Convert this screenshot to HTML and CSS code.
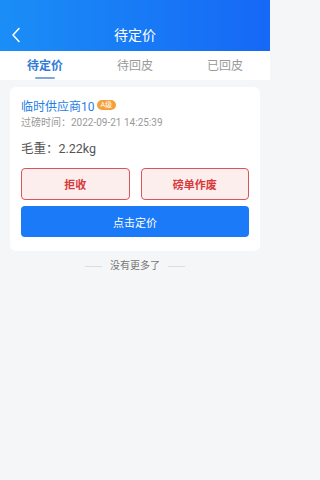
FILE: index.html
```html
<!DOCTYPE html>
<html lang="zh">
<head>
<meta charset="utf-8">
<link rel="stylesheet" href="styles.css">
</head>
<body>
<div class="page">
<div class="header">
  <div class="back">
    <svg width="10" height="16" viewBox="0 0 10 16"><path d="M8 1.5 L2 8 L8 14.5" fill="none" stroke="#fff" stroke-width="1.6" stroke-linecap="round" stroke-linejoin="round"/></svg>
  </div>
  <div class="title">待定价</div>
</div>
<div class="tabs">
  <div class="tab active">待定价</div>
  <div class="tab">待回皮</div>
  <div class="tab">已回皮</div>
</div>
<div class="content">
  <div class="card">
    <div class="name-row">
      <span class="name">临时供应商10</span><span class="badge">A级</span>
    </div>
    <div class="time">过磅时间：2022-09-21 14:25:39</div>
    <div class="weight">毛重：2.22kg</div>
    <div class="btn-row">
      <div class="btn-outline">拒收</div>
      <div class="btn-outline">磅单作废</div>
    </div>
    <div class="btn-primary">点击定价</div>
  </div>
  <div class="nomore"><span class="line"></span><span>没有更多了</span><span class="line"></span></div>
</div>
</div>
</body>
</html>
```
FILE: styles.css
```css
* { box-sizing: border-box; }
html, body { margin: 0; padding: 0; background: #f5f6f8; }
body {
  font-family: Roboto, "Noto Sans CJK SC", sans-serif;
  overflow: hidden;
}
.page {
  width: 270px;
  height: 480px;
  background: #f5f6f8;
}
.header {
  height: 51px;
  background: linear-gradient(90deg, #1a8ef6 0%, #1668f6 100%);
  display: flex;
  align-items: center;
  justify-content: center;
  position: relative;
  padding-top: 18px;
}
.back {
  position: absolute;
  left: 11px;
  top: 27px;
  display: flex;
}
.title {
  color: #fff;
  font-size: 14px;
  line-height: 20px;
}
.tabs {
  height: 29px;
  background: #fff;
  display: flex;
}
.tab {
  flex: 1;
  text-align: center;
  font-size: 12px;
  line-height: 30px;
  color: #999;
  position: relative;
}
.tab.active {
  color: #2f7bd6;
  font-weight: bold;
}
.tab.active::after {
  content: "";
  position: absolute;
  left: 35px;
  width: 20px;
  bottom: 1px;
  height: 2px;
  background: #7da8d8;
  border-radius: 1px;
}
.content {
  padding: 7px 10px 0;
}
.card {
  background: #fff;
  border-radius: 6px;
  padding: 8px 11px 14px;
}
.name-row {
  display: flex;
  align-items: center;
  height: 20px;
}
.name {
  color: #1f7fe6;
  font-size: 12px;
}
.badge {
  margin-left: 2px;
  background: #f5a03a;
  color: #fff;
  font-size: 7px;
  line-height: 10px;
  padding: 0 4px;
  border-radius: 5px;
}
.time {
  font-size: 10px;
  color: #999;
  line-height: 16px;
}
.weight {
  margin-top: 9px;
  font-size: 12.5px;
  color: #555;
  line-height: 18px;
}
.btn-row {
  margin-top: 10px;
  display: flex;
  gap: 11px;
}
.btn-outline {
  flex: 1;
  height: 32px;
  border: 1px solid #d9555a;
  background: #fdeeee;
  color: #d83a3c;
  border-radius: 4px;
  font-size: 11px;
  font-weight: bold;
  display: flex;
  align-items: center;
  justify-content: center;
}
.btn-primary {
  margin-top: 6px;
  height: 31px;
  background: #1a7af8;
  color: #fff;
  border-radius: 4px;
  font-size: 11px;
  display: flex;
  align-items: center;
  justify-content: center;
}
.nomore {
  display: flex;
  align-items: center;
  justify-content: center;
  gap: 8px;
  margin-top: 7px;
  font-size: 10px;
  color: #777;
  line-height: 16px;
}
.line {
  width: 17px;
  height: 1px;
  background: #ddd;
}
```
